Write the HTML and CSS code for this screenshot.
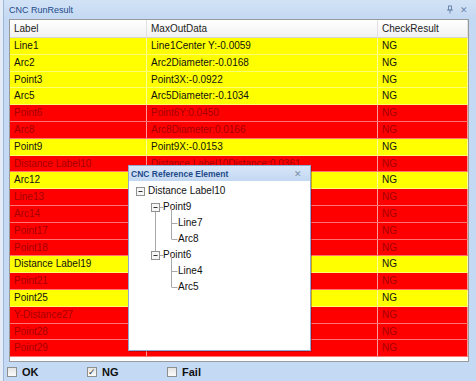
FILE: index.html
```html
<!DOCTYPE html>
<html lang="en">
<head>
    <meta charset="UTF-8">
    <meta name="viewport" content="width=device-width, initial-scale=1.0">
    <title>CNC RunResult</title>
    <link rel="stylesheet" href="styles.css">
</head>
<body>
    <div class="panel">
        <!-- Title bar -->
        <div class="titlebar">
            <span class="title">CNC RunResult</span>
            <span class="tools">
                <svg width="8" height="9" viewBox="0 0 8 9"><path d="M2 1h4M2.5 1v4h3V1M1 5h6M4 5v3.5" stroke="#6d87ad" stroke-width="1" fill="none"/></svg>
                <span class="close">&#x2715;</span>
            </span>
        </div>

        <!-- Result grid -->
        <div class="grid">
            <div class="row head"><div>Label</div><div>MaxOutData</div><div>CheckResult</div></div>
            <div class="row yellow"><div>Line1</div><div>Line1Center Y:-0.0059</div><div>NG</div></div>
            <div class="row yellow"><div>Arc2</div><div>Arc2Diameter:-0.0168</div><div>NG</div></div>
            <div class="row yellow"><div>Point3</div><div>Point3X:-0.0922</div><div>NG</div></div>
            <div class="row yellow"><div>Arc5</div><div>Arc5Diameter:-0.1034</div><div>NG</div></div>
            <div class="row red"><div>Point6</div><div>Point6Y:0.0450</div><div>NG</div></div>
            <div class="row red"><div>Arc8</div><div>Arc8Diameter:0.0166</div><div>NG</div></div>
            <div class="row yellow"><div>Point9</div><div>Point9X:-0.0153</div><div>NG</div></div>
            <div class="row red"><div>Distance Label10</div><div>Distance Label10Distance:0.0361</div><div>NG</div></div>
            <div class="row yellow"><div>Arc12</div><div></div><div>NG</div></div>
            <div class="row red"><div>Line13</div><div></div><div>NG</div></div>
            <div class="row red"><div>Arc14</div><div></div><div>NG</div></div>
            <div class="row red"><div>Point17</div><div></div><div>NG</div></div>
            <div class="row red"><div>Point18</div><div></div><div>NG</div></div>
            <div class="row yellow"><div>Distance Label19</div><div></div><div>NG</div></div>
            <div class="row red"><div>Point21</div><div></div><div>NG</div></div>
            <div class="row yellow"><div>Point25</div><div></div><div>NG</div></div>
            <div class="row red"><div>Y-Distance27</div><div></div><div>NG</div></div>
            <div class="row red"><div>Point28</div><div></div><div>NG</div></div>
            <div class="row red"><div>Point29</div><div>Point29Y:0.0503</div><div>NG</div></div>
        </div>

        <!-- Filter bar -->
        <div class="footer">
            <label class="check"><span class="box"></span>OK</label>
            <label class="check"><span class="box checked">&#x2713;</span>NG</label>
            <label class="check"><span class="box"></span>Fail</label>
        </div>

        <!-- Floating reference window -->
        <div class="popup">
            <div class="popup-title">
                <span>CNC Reference Element</span>
                <span class="popup-close">&#x2715;</span>
            </div>
            <svg class="tree-lines" width="183" height="186" viewBox="0 0 183 186">
                <g stroke="#a8a8a8" stroke-width="1" fill="none">
                    <path d="M26.5 45v40"/>
                    <path d="M30.5 41.5h4"/>
                    <path d="M30.5 89.5h4"/>
                    <path d="M42.5 41v32M42.5 57.5h6M42.5 73.5h6"/>
                    <path d="M42.5 89v32M42.5 105.5h6M42.5 121.5h6"/>
                </g>
                <g stroke="#909090" fill="#f6f6f6">
                    <rect x="7.5" y="21.5" width="8" height="8"/>
                    <rect x="22.5" y="37.5" width="8" height="8"/>
                    <rect x="22.5" y="85.5" width="8" height="8"/>
                </g>
                <g stroke="#333" stroke-width="1">
                    <path d="M9.5 25.5h4M24.5 41.5h4M24.5 89.5h4"/>
                </g>
            </svg>
            <ul class="tree">
                <li class="lvl0">Distance Label10</li>
                <li class="lvl1">Point9</li>
                <li class="lvl2">Line7</li>
                <li class="lvl2">Arc8</li>
                <li class="lvl1">Point6</li>
                <li class="lvl2">Line4</li>
                <li class="lvl2">Arc5</li>
            </ul>
        </div>
    </div>
</body>
</html>
```

FILE: styles.css
```css
* {
    box-sizing: border-box;
    margin: 0;
    padding: 0;
    font-family: "Liberation Sans", Arial, sans-serif;
}
body {
    width: 476px;
    height: 381px;
    overflow: hidden;
    background-color: #e3ecf7;
}
.panel {
    position: relative;
    height: 381px;
    margin-left: 3px;
    border-left: 1px solid #9fb8da;
    background-color: #c4d9f3;
}
.titlebar {
    display: flex;
    align-items: center;
    justify-content: space-between;
    height: 19px;
    padding: 0 8px 0 5px;
    background: linear-gradient(#d3e3f6, #c3d8f2);
}
.title {
    font-size: 9px;
    color: #1e4a8a;
}
.tools {
    display: flex;
    align-items: center;
    gap: 6px;
}
.close {
    font-size: 9px;
    color: #6d87ad;
}
.grid {
    width: 460px;
    height: 343px;
    margin-left: 5px;
    border: 1px solid #9a9a9a;
    background-color: #fff;
}
.row {
    display: grid;
    grid-template-columns: 137px 231px 90px;
    height: 16.8px;
    font-size: 10px;
    line-height: 16px;
    border-bottom: 1px solid rgba(255, 255, 255, 0.45);
}
.row div {
    padding-left: 4px;
    white-space: nowrap;
    overflow: hidden;
    border-right: 1px solid rgba(255, 255, 255, 0.6);
}
.row.head {
    height: 18px;
    line-height: 17px;
    color: #222;
    background: linear-gradient(#fff, #f1f1f1);
    border-bottom: 1px solid #d5d5d5;
}
.row.head div {
    border-right: 1px solid #e2e2e2;
}
.row.yellow {
    background-color: #ffff00;
    color: #111;
}
.row.red {
    background-color: #ff0000;
    color: #a50000;
}
.footer {
    display: flex;
    align-items: center;
    height: 19px;
    padding-left: 3px;
}
.check {
    display: flex;
    align-items: center;
    gap: 5px;
    width: 80px;
    font-size: 11px;
    font-weight: bold;
    color: #111;
}
.box {
    display: flex;
    align-items: center;
    justify-content: center;
    width: 10px;
    height: 10px;
    border: 1px solid #8e8f8f;
    background: linear-gradient(#e4e4e4, #fbfbfb);
    font-size: 9px;
    font-weight: normal;
    color: #333;
}
.popup {
    position: absolute;
    left: 124px;
    top: 165px;
    width: 183px;
    height: 186px;
    border: 1px solid #8ea9d2;
    background-color: #fff;
    box-shadow: 1px 1px 0 rgba(120, 0, 0, 0.35);
}
.popup-title {
    display: flex;
    align-items: center;
    justify-content: space-between;
    height: 15px;
    padding: 0 8px 0 2px;
    background: linear-gradient(#d9e7f8, #c2d7f2);
    font-size: 8.5px;
    font-weight: bold;
    color: #1e4a8a;
}
.popup-close {
    font-size: 9px;
    font-weight: normal;
    color: #7a8ea8;
}
.tree-lines {
    position: absolute;
    left: 0;
    top: 0;
}
.tree {
    list-style: none;
    padding-top: 2px;
    font-size: 10px;
    color: #111;
}
.tree li {
    height: 16px;
    line-height: 16px;
}
.lvl0 {
    padding-left: 19px;
}
.lvl1 {
    padding-left: 34px;
}
.lvl2 {
    padding-left: 49px;
}
```
